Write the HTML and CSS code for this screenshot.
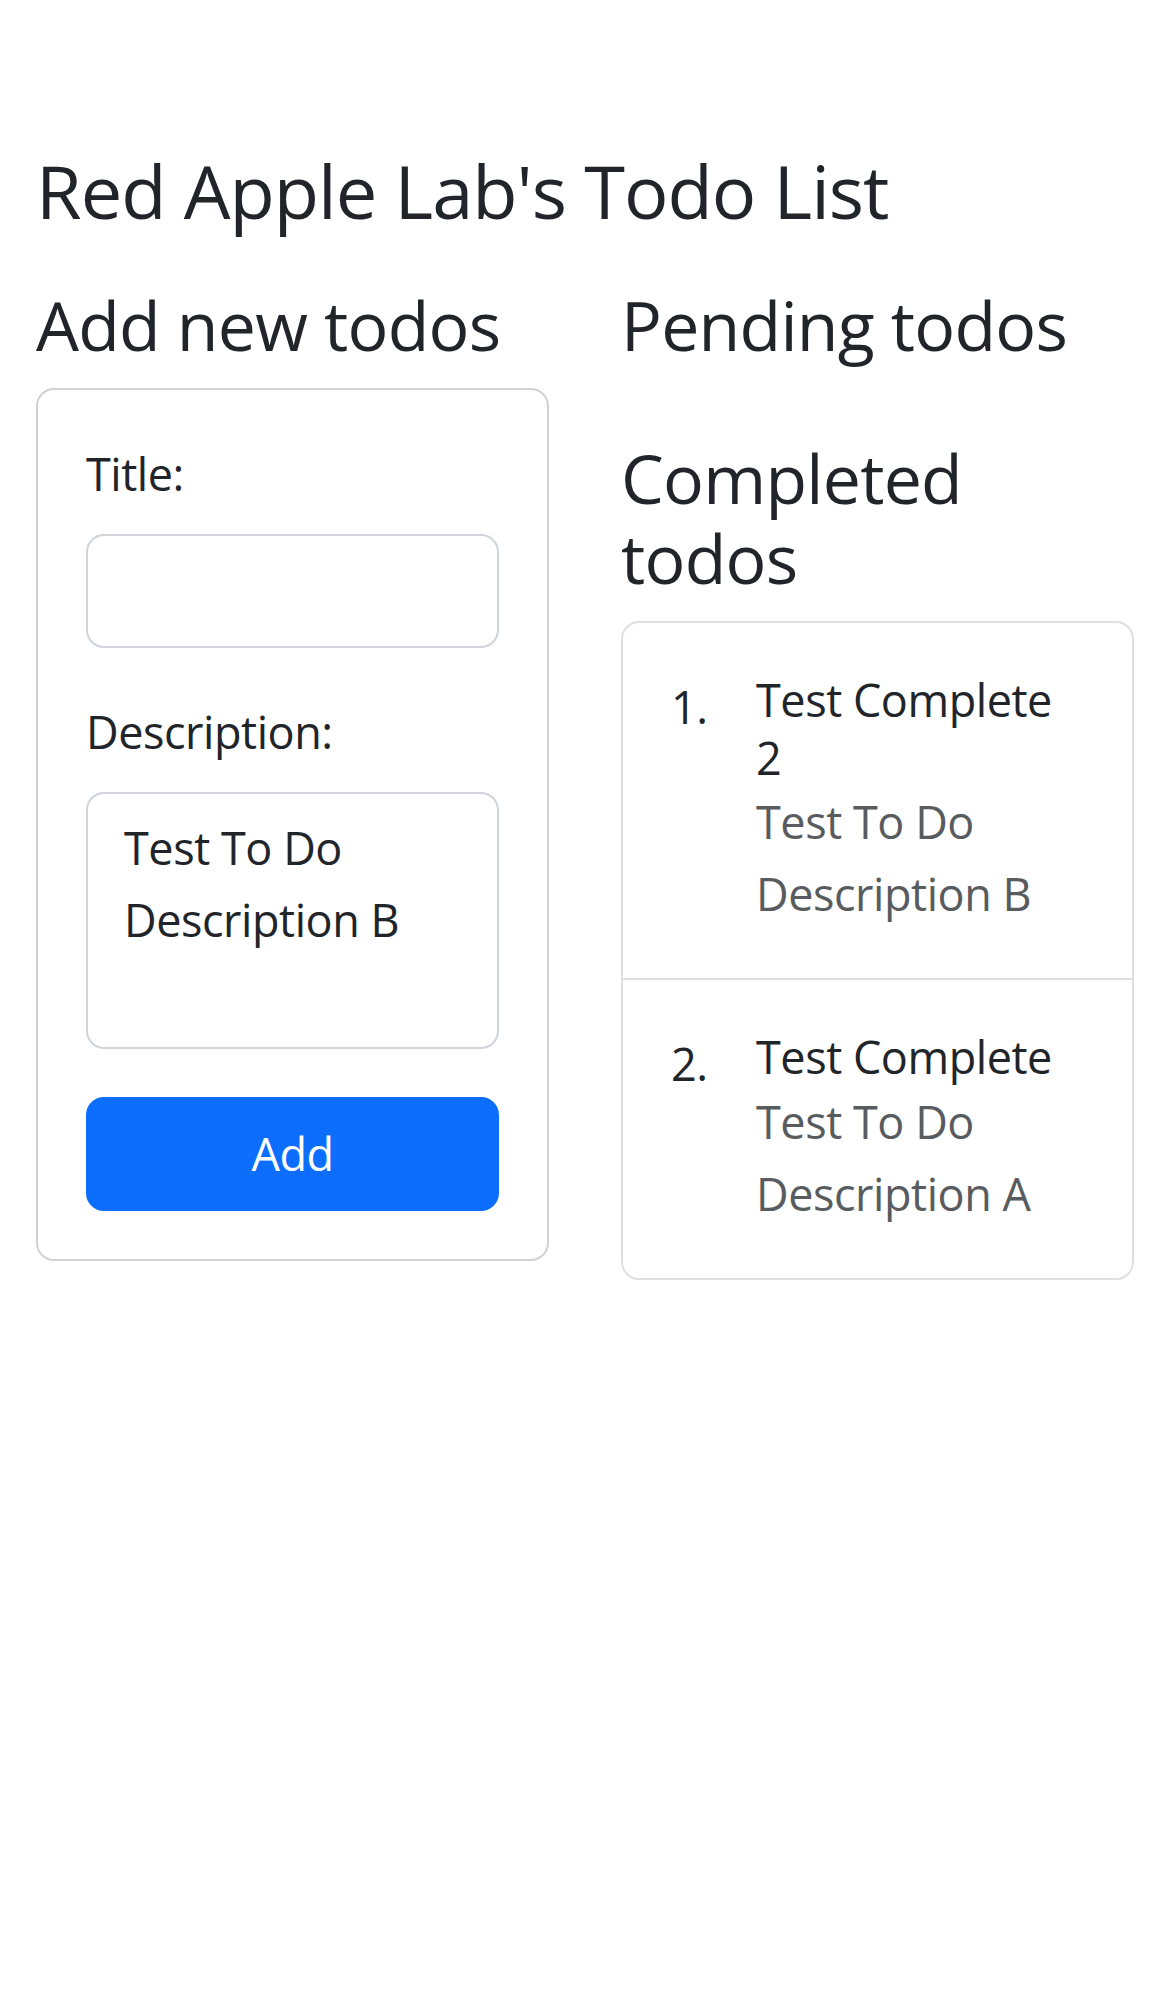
FILE: index.html
```html
<!DOCTYPE html>
<html lang="en">
<head>
<meta charset="utf-8">
<title>Red Apple Lab's Todo List</title>
<link rel="stylesheet" href="styles.css">
</head>
<body>
<div class="container">
  <h1 class="page-title">Red Apple Lab's Todo List</h1>
  <div class="columns">
    <section class="column">
      <h2 class="section-title">Add new todos</h2>
      <div class="card">
        <form class="card-body">
          <div class="field">
            <label class="field-label" for="todo-title">Title:</label>
            <input class="field-input" id="todo-title" type="text">
          </div>
          <div class="field">
            <label class="field-label" for="todo-desc">Description:</label>
            <textarea class="field-input field-textarea" id="todo-desc">Test To Do Description B</textarea>
          </div>
          <button class="btn-add" type="button">Add</button>
        </form>
      </div>
    </section>
    <section class="column">
      <h2 class="section-title">Pending todos</h2>
      <ol class="todo-list todo-list-empty"></ol>
      <h2 class="section-title">Completed todos</h2>
      <ol class="todo-list">
        <li class="todo-item">
          <div class="todo-body">
            <div class="todo-title">Test Complete 2</div>
            <div class="todo-desc">Test To Do Description B</div>
          </div>
        </li>
        <li class="todo-item">
          <div class="todo-body">
            <div class="todo-title">Test Complete</div>
            <div class="todo-desc">Test To Do Description A</div>
          </div>
        </li>
      </ol>
    </section>
  </div>
</div>
</body>
</html>
```
FILE: styles.css
```css
* {
  box-sizing: border-box;
}

html, body {
  margin: 0;
  padding: 0;
  background: #ffffff;
}

body {
  font-family: "Open Sans", "Noto Sans", "Liberation Sans", sans-serif;
  font-size: 45px;
  line-height: 72px;
  letter-spacing: -0.45px;
  color: #212529;
}

.container {
  padding: 141px 36px 0;
}

.page-title {
  margin: 0;
  font-size: 74px;
  line-height: 100px;
  letter-spacing: -1px;
  font-weight: 400;
}

.columns {
  margin-top: 44px;
  display: grid;
  grid-template-columns: 1fr 1fr;
  column-gap: 72px;
  align-items: start;
}

.column {
  min-width: 0;
}

.section-title {
  margin: 0 0 23px;
  font-size: 68px;
  line-height: 80px;
  letter-spacing: -0.75px;
  font-weight: 400;
}

.card {
  border: 2px solid #d2d2d2;
  border-radius: 18px;
  background: #fff;
}

.card-body {
  margin: 0;
  padding: 48px;
}

.field {
  margin-bottom: 48px;
}

.field-label {
  display: block;
  margin-bottom: 24px;
  line-height: 72px;
}

.field-input {
  display: block;
  width: 100%;
  height: 114px;
  margin: 0;
  padding: 18px 36px;
  border: 2px solid #ced4da;
  border-radius: 18px;
  background: #fff;
  font: inherit;
  letter-spacing: inherit;
  line-height: 72px;
  color: #212529;
  outline: none;
}

.field-textarea {
  height: 257px;
  resize: none;
  overflow: hidden;
}

.btn-add {
  display: block;
  width: 100%;
  height: 114px;
  margin: 0;
  padding: 18px 36px;
  border: 2px solid #0d6efd;
  border-radius: 18px;
  background: #0d6efd;
  color: #ffffff;
  font: inherit;
  letter-spacing: inherit;
  line-height: 72px;
  text-align: center;
}

.todo-list {
  list-style: none;
  margin: 0;
  padding: 0;
  border: 2px solid #dfdfdf;
  border-radius: 18px;
  counter-reset: todo;
}

.todo-list-empty {
  display: flow-root;
  border: 0;
  margin-bottom: 50px;
}

.todo-item {
  display: flex;
  align-items: flex-start;
  padding: 48px;
  counter-increment: todo;
}

.todo-item + .todo-item {
  border-top: 2px solid #dfdfdf;
}

.todo-item::before {
  content: counter(todo) ".";
  flex: 0 0 85px;
  line-height: 72px;
}

.todo-body {
  flex: 1;
  min-width: 0;
  padding-right: 12px;
}

.todo-title {
  line-height: 57.6px;
}

.todo-desc {
  line-height: 72px;
  color: #595c5f;
}
```
